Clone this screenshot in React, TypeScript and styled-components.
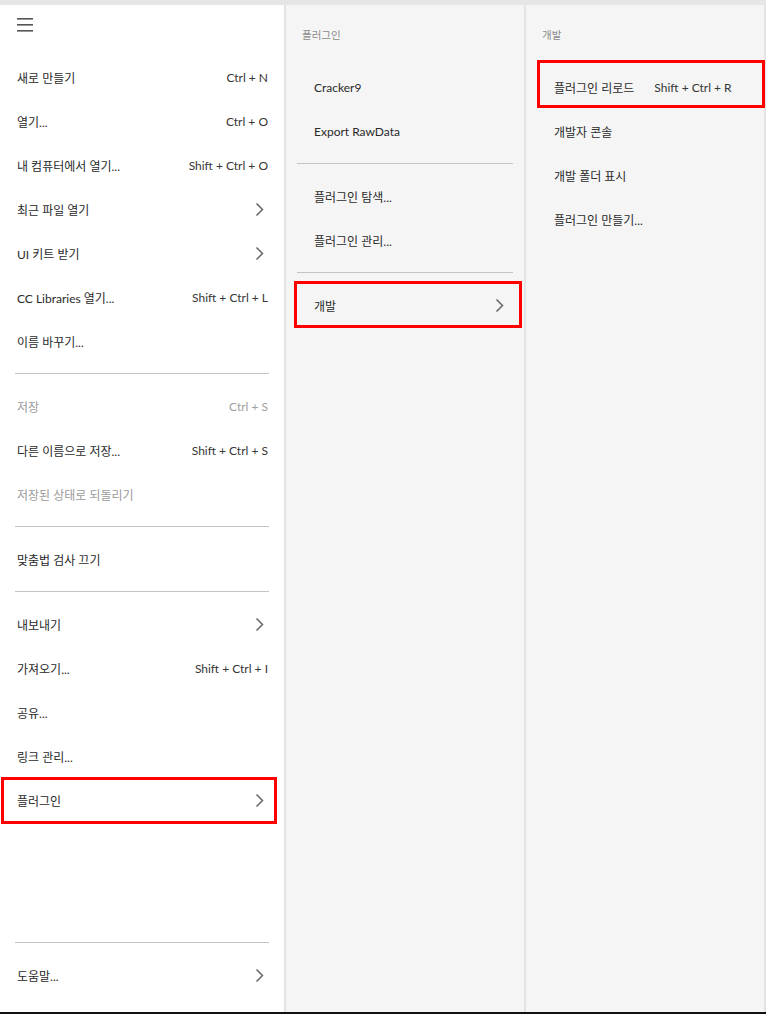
import React from "react";
import styled, { createGlobalStyle } from "styled-components";

type Item = {
  label: string;
  shortcut?: string;
  sub?: boolean;
  disabled?: boolean;
  divider?: boolean;
};

type Box = { top: number; right: number; bottom: number; left: number };

const GlobalStyle = createGlobalStyle`
  html, body {
    margin: 0;
    padding: 0;
    background: #ffffff;
  }
  body {
    font-family: Lato, "Noto Sans CJK KR", sans-serif;
    -webkit-font-smoothing: antialiased;
  }
`;

const Page = styled.div`
  width: 766px;
  height: 1014px;
  display: flex;
  flex-direction: column;
  background: #e6e6e6;
  overflow: hidden;
`;

const TopStrip = styled.div`
  height: 5px;
  flex: none;
  background: #e6e6e6;
`;

const Columns = styled.div`
  flex: 1;
  display: flex;
  min-height: 0;
`;

const BottomBar = styled.div`
  height: 2px;
  flex: none;
  background: #111;
`;

const Column = styled.div<{ $width: number; $bg: string }>`
  width: ${(p) => p.$width}px;
  flex: none;
  display: flex;
  flex-direction: column;
  background: ${(p) => p.$bg};
  border-right: 2px solid #e4e4e4;
  box-sizing: content-box;
`;

const MenuHeader = styled.div`
  height: 50px;
  flex: none;
  display: flex;
  align-items: flex-start;
  padding: 13px 0 0 17px;
  box-sizing: border-box;
`;

const SubHeader = styled.div`
  height: 60px;
  flex: none;
  padding: 22px 0 0 16px;
  box-sizing: border-box;
  font-size: 10.5px;
  color: #8a8a8a;
`;

const Row = styled.div<{ $indent: number; $disabled?: boolean; $box?: Box }>`
  position: relative;
  height: 44px;
  flex: none;
  display: flex;
  align-items: center;
  padding: 0 16px 0 ${(p) => p.$indent}px;
  font-size: 12px;
  color: ${(p) => (p.$disabled ? "#9a9a9a" : "#2a2a2a")};

  &::after {
    content: "";
    display: ${(p) => (p.$box ? "block" : "none")};
    position: absolute;
    top: ${(p) => p.$box?.top ?? 0}px;
    right: ${(p) => p.$box?.right ?? 0}px;
    bottom: ${(p) => p.$box?.bottom ?? 0}px;
    left: ${(p) => p.$box?.left ?? 0}px;
    border: 3px solid #ff0000;
    pointer-events: none;
  }
`;

const Label = styled.span`
  white-space: nowrap;
`;

const Shortcut = styled.span<{ $inline?: boolean; $disabled?: boolean }>`
  margin-left: ${(p) => (p.$inline ? "20px" : "auto")};
  white-space: nowrap;
  color: ${(p) => (p.$disabled ? "#a0a0a0" : "#363636")};
`;

const Chevron = styled.svg`
  margin-left: auto;
  margin-right: 4px;
  flex: none;
`;

const Divider = styled.div<{ $inset: number }>`
  height: 21px;
  flex: none;
  display: flex;
  align-items: center;
  padding: 0 ${(p) => p.$inset}px;

  &::before {
    content: "";
    flex: 1;
    height: 1px;
    background: #c4c4c4;
  }
`;

const Spacer = styled.div`
  flex: 1;
`;

const Footer = styled.div`
  flex: none;
  padding-bottom: 15px;
`;

function ChevronIcon() {
  return (
    <Chevron width="9" height="15" viewBox="0 0 9 15">
      <path d="M1.5 1.5 L7.5 7.5 L1.5 13.5" fill="none" stroke="#666" strokeWidth="1.5" />
    </Chevron>
  );
}

function Hamburger() {
  return (
    <svg width="16" height="14" viewBox="0 0 16 14">
      <rect x="0" y="0" width="16" height="1.6" fill="#555" />
      <rect x="0" y="6" width="16" height="1.6" fill="#555" />
      <rect x="0" y="12" width="16" height="1.6" fill="#555" />
    </svg>
  );
}

const mainItems: Item[] = [
  { label: "새로 만들기", shortcut: "Ctrl + N" },
  { label: "열기...", shortcut: "Ctrl + O" },
  { label: "내 컴퓨터에서 열기...", shortcut: "Shift + Ctrl + O" },
  { label: "최근 파일 열기", sub: true },
  { label: "UI 키트 받기", sub: true },
  { label: "CC Libraries 열기...", shortcut: "Shift + Ctrl + L" },
  { label: "이름 바꾸기..." },
  { label: "", divider: true },
  { label: "저장", shortcut: "Ctrl + S", disabled: true },
  { label: "다른 이름으로 저장...", shortcut: "Shift + Ctrl + S" },
  { label: "저장된 상태로 되돌리기", disabled: true },
  { label: "", divider: true },
  { label: "맞춤법 검사 끄기" },
  { label: "", divider: true },
  { label: "내보내기", sub: true },
  { label: "가져오기...", shortcut: "Shift + Ctrl + I" },
  { label: "공유..." },
  { label: "링크 관리..." },
  { label: "플러그인", sub: true },
];

const pluginItems: Item[] = [
  { label: "Cracker9" },
  { label: "Export RawData" },
  { label: "", divider: true },
  { label: "플러그인 탐색..." },
  { label: "플러그인 관리..." },
  { label: "", divider: true },
  { label: "개발", sub: true },
];

const devItems: Item[] = [
  { label: "플러그인 리로드", shortcut: "Shift + Ctrl + R" },
  { label: "개발자 콘솔" },
  { label: "개발 폴더 표시" },
  { label: "플러그인 만들기..." },
];

type ListProps = {
  items: Item[];
  indent: number;
  dividerInset: number;
  inlineShortcut?: boolean;
  boxes?: Record<string, Box>;
};

function MenuList({ items, indent, dividerInset, inlineShortcut, boxes }: ListProps) {
  return (
    <>
      {items.map((item, i) =>
        item.divider ? (
          <Divider key={i} $inset={dividerInset} />
        ) : (
          <Row key={i} $indent={indent} $disabled={item.disabled} $box={boxes?.[item.label]}>
            <Label>{item.label}</Label>
            {item.shortcut && (
              <Shortcut $inline={inlineShortcut} $disabled={item.disabled}>
                {item.shortcut}
              </Shortcut>
            )}
            {item.sub && <ChevronIcon />}
          </Row>
        )
      )}
    </>
  );
}

export default function App() {
  return (
    <>
      <GlobalStyle />
      <Page>
        <TopStrip />
        <Columns>
          <Column $width={284} $bg="#ffffff">
            <MenuHeader>
              <Hamburger />
            </MenuHeader>
            <MenuList
              items={mainItems}
              indent={17}
              dividerInset={15}
              boxes={{ 플러그인: { top: -1, right: 7, bottom: -2, left: 1 } }}
            />
            <Spacer />
            <Footer>
              <Divider $inset={15} />
              <Row $indent={17}>
                <Label>도움말...</Label>
                <ChevronIcon />
              </Row>
            </Footer>
          </Column>
          <Column $width={238} $bg="#f5f5f5">
            <SubHeader>플러그인</SubHeader>
            <MenuList
              items={pluginItems}
              indent={28}
              dividerInset={11}
              boxes={{ 개발: { top: -2, right: 2, bottom: -1, left: 8 } }}
            />
          </Column>
          <Column $width={238} $bg="#f5f5f5">
            <SubHeader>개발</SubHeader>
            <MenuList
              items={devItems}
              indent={28}
              dividerInset={11}
              inlineShortcut
              boxes={{ "플러그인 리로드": { top: -5, right: -1, bottom: 1, left: 11 } }}
            />
          </Column>
        </Columns>
        <BottomBar />
      </Page>
    </>
  );
}
